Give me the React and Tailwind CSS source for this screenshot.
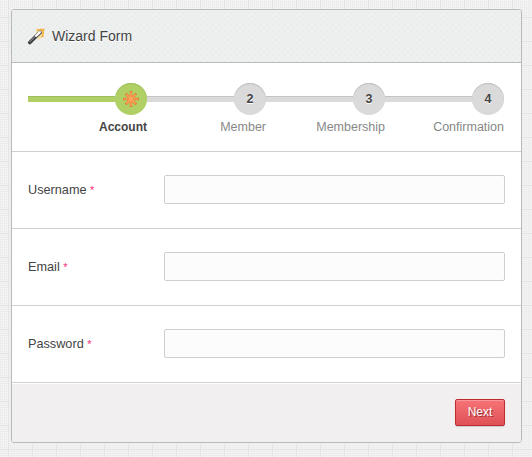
const steps = [
  { id: 1, label: "Account", active: true },
  { id: 2, label: "Member" },
  { id: 3, label: "Membership" },
  { id: 4, label: "Confirmation" },
];

const fields = ["Username", "Email", "Password"];

function WandIcon() {
  return (
    <svg width="18" height="18" viewBox="0 0 18 18" className="block">
      <path d="M8.500 4l2-2.200 2 .2 1.500-1 1.500 1 1.800-.2-.4 2 .4 2-.8 1.500.5 2-2 1.200L11 13z" fill="#fbcf74" opacity=".6" />
      <path d="M10 3.500l.8-1 1.700.8L14 2.500l1 .8 1.700-.8-.7 2 .5 1.700-1 1 .5 2-1.500.8" fill="none" stroke="#f0a92f" strokeWidth="1.200" />
      <path d="M2.800 15.600L13 5.400" stroke="#3f4044" strokeWidth="3.600" strokeLinecap="round" />
      <path d="M9 9L12.900 5.100" stroke="#fff" strokeWidth="2.200" strokeLinecap="round" />
      <path d="M3 14.600L8 9.600" stroke="#a5a5aa" strokeWidth="1" strokeLinecap="round" />
    </svg>
  );
}

function StarIcon() {
  return (
    <svg width="16" height="16" viewBox="0 0 16 16" className="block">
      <path d="M8 0v16M0 8h16M2.700 2.700l10.600 10.600M13.300 2.700l-10.600 10.600" stroke="#e8772f" strokeWidth="2.500" />
      <path d="M8 1v14M1 8h14M3.500 3.500l9 9M12.500 3.500l-9 9" stroke="#ffac68" strokeWidth="1.200" />
      <circle cx="8" cy="8" r="1.800" fill="#ffa658" />
    </svg>
  );
}

export default function App() {
  return (
    <div className="h-[457px] w-[532px] bg-[#f1f1f1] bg-[linear-gradient(to_right,#e4e4e4_1px,transparent_1px),linear-gradient(to_bottom,#e4e4e4_1px,transparent_1px),linear-gradient(to_right,#f2f2f2_1px,transparent_1px),linear-gradient(to_bottom,#f2f2f2_1px,#e8e8e8_1px)] bg-[size:24px_24px,24px_24px,2px_2px,2px_2px] bg-[position:8px_17px,8px_17px,1px_0px,1px_0px] pt-[9px] pl-[11px] font-['Liberation_Sans',Arial,sans-serif] text-[#444]">
      <div className="flex h-[434px] w-[511px] flex-col overflow-hidden rounded-[3px] border border-[#bababa] bg-white">
        <header className="flex h-[53px] items-center border-b border-[#bababa] bg-[#eef0f0] bg-[radial-gradient(#e7ebea_0.7px,transparent_1px),radial-gradient(#e7ebea_0.7px,transparent_1px)] bg-[size:6px_6px] bg-[position:0_0,3px_3px] pl-[15px]">
          <WandIcon />
          <h1 className="ml-[7px] text-[14px] leading-5 [text-shadow:0_1px_0_#fff]">Wizard Form</h1>
        </header>
        <div className="grid h-[89px] grid-cols-[119px_119px_119px_119px] border-b border-[#d0d0d0] pt-5 pl-4">
          {steps.map((s) => (
            <div key={s.id}>
              <div className="flex h-8 items-center">
                <div className={`h-[6px] flex-1 border-t ${s.active ? "border-[#9fbe60] bg-[#b0d065]" : "border-[#c4c4c4] bg-[#dadada]"}`} />
                <div className={`flex size-8 items-center justify-center rounded-full text-[12.5px] font-bold ${s.active ? "bg-[#b0d065] shadow-[inset_0_1px_1px_#9fbe60]" : "bg-[#dadada] shadow-[inset_0_1px_1px_#bdbdbd]"}`}>
                  {s.active ? <StarIcon /> : <span className="[text-shadow:0_1px_0_#fff]">{s.id}</span>}
                </div>
              </div>
              <div className={`mt-[3px] text-right leading-[18px] ${s.active ? "text-[12px] font-bold text-[#444]" : "text-[12.5px] text-[#888]"}`}>{s.label}</div>
            </div>
          ))}
        </div>
        {fields.map((name) => (
          <label key={name} className="flex h-[77px] items-center border-b border-[#d0d0d0] pr-4 pl-4">
            <span className="w-[136px] pt-px text-[12.7px] leading-[17px]">
              {name} <span className="text-[11px] text-[#ff2a78]">*</span>
            </span>
            <input className="mb-0.5 h-[29px] min-w-0 flex-1 rounded-[2px] border border-[#cecece] bg-[#fcfcfc] px-2 text-[12px] outline-none" />
          </label>
        ))}
        <footer className="flex flex-1 items-center justify-end border-t border-white bg-[#f1eff0] pr-4 pb-0.5">
          <button className="h-[27px] w-[50px] rounded-[2px] border border-[#bd2b2f] bg-linear-to-b from-[#f77377] to-[#df5155] text-[12px] text-white shadow-[inset_0_1px_0_#ffffff40,0_1px_1px_#00000026] [text-shadow:1px_1px_0_#9e3034]">Next</button>
        </footer>
      </div>
    </div>
  );
}
